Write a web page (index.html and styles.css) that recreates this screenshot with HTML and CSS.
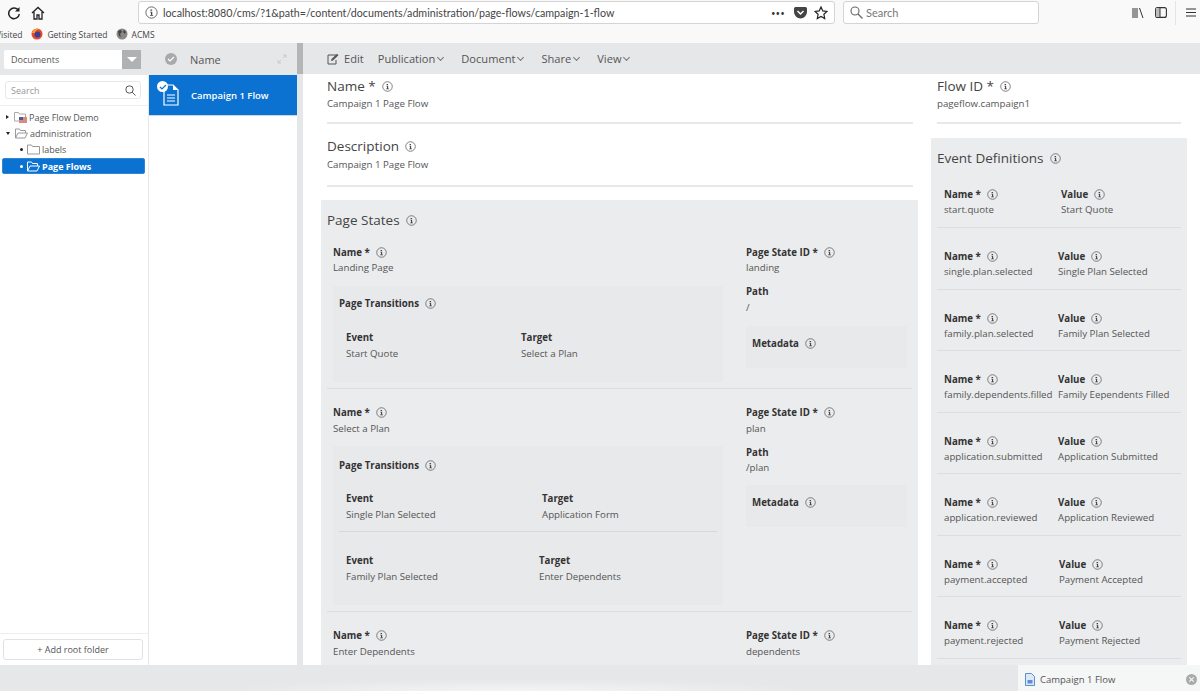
FILE: index.html
```html
<!DOCTYPE html>
<html>
<head>
<meta charset="utf-8">
<title>Campaign 1 Flow</title>
<link rel="stylesheet" href="styles.css">
</head>
<body>
<svg class="defs" width="0" height="0">
  <symbol id="info" viewBox="0 0 12 12">
    <circle cx="6" cy="6" r="5.2" fill="none" stroke="#555" stroke-width=".8"/>
    <path d="M5 3.2h1.6v1.2H5zM4.8 5.3h1.9v2.9h.8v.8H4.600v-.8h.9V6.100h-.7z" fill="#444"/>
  </symbol>
</svg>
<div class="browser">
  <div class="navrow">
    <svg class="nav-ic reload" width="14" height="14" viewBox="0 0 14 14"><path d="M11.500 4.500A5.300 5.300 0 1 0 12.300 8" fill="none" stroke="#222" stroke-width="1.500"/><path d="M12.500 1v4.500H8z" fill="#222"/></svg>
    <svg class="nav-ic home" width="14" height="14" viewBox="0 0 14 14"><path d="M1 7l6-5.500L13 7M3 6v7h3V9h2v4h3V6" fill="none" stroke="#222" stroke-width="1.300"/></svg>
    <div class="urlbar">
      <svg width="13" height="13"><use href="#info"/></svg>
      <span class="url">localhost:8080/cms/?1&amp;path=/content/documents/administration/page-flows/campaign-1-flow</span>
      <span class="dots">•••</span>
      <svg class="pocket" width="13" height="12" viewBox="0 0 13 12"><path d="M1.500 0h10A1.500 1.500 0 0 1 13 1.500V5A6.500 6.500 0 0 1 0 5V1.500A1.500 1.500 0 0 1 1.500 0z" fill="#444"/><path d="M3.500 4l3 3 3-3" fill="none" stroke="#fff" stroke-width="1.500"/></svg>
      <svg class="star" width="14" height="14" viewBox="0 0 14 14"><path d="M7 1l1.800 3.900 4.200.5-3.100 2.900.8 4.200L7 10.400l-3.700 2.100.8-4.200L1 5.400l4.200-.5z" fill="none" stroke="#222" stroke-width="1.200"/></svg>
    </div>
    <div class="searchbar">
      <svg width="13" height="13" viewBox="0 0 13 13"><circle cx="5" cy="5" r="4" fill="none" stroke="#666" stroke-width="1.100"/><path d="M8 8l4.500 4.500" stroke="#666" stroke-width="1.200"/></svg>
      <span>Search</span>
    </div>
    <svg class="tool lib" width="12" height="12" viewBox="0 0 12 12"><path d="M1 1v10M3 1v10M5 1v10M7.500 1l3.500 10" stroke="#333" stroke-width="1" fill="none"/></svg>
    <svg class="tool side" width="12" height="11" viewBox="0 0 12 11"><rect x=".6" y=".6" width="10.800" height="9.800" rx="2" fill="none" stroke="#333" stroke-width="1.100"/><path d="M1 1h4v9H1z" fill="#bbb"/><path d="M5 1v9" stroke="#333"/></svg>
    <span class="tool-sep"></span>
    <svg class="tool menu" width="10" height="9" viewBox="0 0 10 9"><path d="M0 1h10M0 4.500h10M0 8h10" stroke="#333" stroke-width="1.100"/></svg>
  </div>
  <div class="bookmarks">
    <span class="bm bm-cut">Visited</span>
    <span class="bm"><svg width="12" height="12" viewBox="0 0 12 12"><circle cx="6" cy="6" r="5.500" fill="#e5492a"/><circle cx="6.500" cy="6.500" r="3" fill="#3a3f9e"/><path d="M1 5Q3 0 8 1 4 2 4 5z" fill="#f6a623"/></svg>Getting Started</span>
    <span class="bm"><svg width="12" height="12" viewBox="0 0 12 12"><circle cx="6" cy="6" r="5.500" fill="#888"/><path d="M2 3l3-1 1 2-2 2 1 3-2-1zM8 2l2 2-1 2-2-2z" fill="#444"/></svg>ACMS</span>
  </div>
</div>

<div class="app">
  <aside class="tree-pane">
    <div class="tree-head">
      <div class="select"><span>Documents</span><b class="select-btn"><i></i></b></div>
    </div>
    <div class="tree-search">
      <div class="search-box"><span>Search</span>
        <svg width="11" height="11" viewBox="0 0 11 11"><circle cx="4.500" cy="4.500" r="3.700" fill="none" stroke="#555"/><path d="M7.200 7.200l3.300 3.300" stroke="#555"/></svg>
      </div>
    </div>
    <ul class="tree">
      <li class="lvl1"><i class="arrow right"></i>
        <svg class="folder" width="13" height="12" viewBox="0 0 13 12"><path d="M.5 10V1.500h4l1 1.500h6v7z" fill="none" stroke="#aaa"/><rect x="5" y="6" width="8" height="6" fill="#d98a85"/><rect x="5" y="6" width="4" height="3" fill="#4a5d96"/></svg>
        Page Flow Demo</li>
      <li class="lvl1"><i class="arrow down"></i>
        <svg class="folder" width="13" height="11" viewBox="0 0 13 11"><path d="M.5 10V1h4l1 1.500h5V5M.5 10L3 5h9.500L10 10z" fill="none" stroke="#999"/></svg>
        administration</li>
      <li class="lvl2"><i class="dot"></i>
        <svg class="folder" width="13" height="11" viewBox="0 0 13 11"><path d="M.5 10V1h4l1 1.500h7V10z" fill="none" stroke="#999"/></svg>
        labels</li>
      <li class="lvl2 active"><i class="dot"></i>
        <svg class="folder" width="13" height="11" viewBox="0 0 13 11"><path d="M.5 10V1h4l1 1.500h5V5M.5 10L3 5h9.500L10 10z" fill="none" stroke="#fff"/></svg>
        Page Flows</li>
    </ul>
    <div class="tree-foot"><button>+ Add root folder</button></div>
  </aside>

  <section class="list-pane">
    <div class="list-head">
      <span class="check"><svg width="8" height="8" viewBox="0 0 8 8"><path d="M1 4l2 2 4-4" fill="none" stroke="#fff" stroke-width="1.200"/></svg></span>
      <span class="list-title">Name</span>
      <svg class="expand" width="10" height="10" viewBox="0 0 10 10"><path d="M6 1h3v3M9 1L6 4M4 9H1V6M1 9l3-3" fill="none" stroke="#c8c9cb"/></svg>
    </div>
    <div class="list-item">
      <span class="doc-ic">
        <svg width="18" height="22" viewBox="0 0 18 22"><path d="M3 1h9l5 5v15H3z" fill="none" stroke="#fff" stroke-width="1.200"/><path d="M12 1v5h5" fill="#fff"/><path d="M6 11h8M6 14h8M6 17h8" stroke="#fff" stroke-width="1.200"/></svg>
        <span class="doc-check"><svg width="8" height="8" viewBox="0 0 8 8"><path d="M1 4l2 2 4-4" fill="none" stroke="#0b72d2" stroke-width="1.200"/></svg></span>
      </span>
      <span>Campaign 1 Flow</span>
    </div>
  </section>

  <div class="splitter"></div>

  <main class="editor">
    <nav class="toolbar">
      <span class="tb-item tb-edit"><svg width="13" height="12" viewBox="0 0 13 12"><path d="M9 2H1v9h8V7" fill="none" stroke="#555"/><path d="M4 8l.5-2L10 .8l1.500 1.500L6 7.500z" fill="#555"/></svg>Edit</span>
      <span class="tb-item">Publication<i class="chev"></i></span>
      <span class="tb-item">Document<i class="chev"></i></span>
      <span class="tb-item">Share<i class="chev"></i></span>
      <span class="tb-item">View<i class="chev"></i></span>
    </nav>
    <div class="form">
      <div class="col-left">
        <div class="big-field first">
          <h2>Name * <svg class="i"><use href="#info"/></svg></h2>
          <p>Campaign 1 Page Flow</p>
        </div>
        <div class="big-field second">
          <h2>Description <svg class="i"><use href="#info"/></svg></h2>
          <p>Campaign 1 Page Flow</p>
        </div>
        <section class="panel states">
          <h2>Page States <svg class="i"><use href="#info"/></svg></h2>

          <div class="state s1">
            <div class="state-main">
              <div class="fld"><h4>Name * <svg class="i"><use href="#info"/></svg></h4><p>Landing Page</p></div>
              <div class="transitions">
                <h4>Page Transitions <svg class="i"><use href="#info"/></svg></h4>
                <div class="trans t1"><div><h5>Event</h5><p>Start Quote</p></div><div><h5>Target</h5><p>Select a Plan</p></div></div>
              </div>
            </div>
            <div class="state-side">
              <div class="fld"><h4>Page State ID * <svg class="i"><use href="#info"/></svg></h4><p>landing</p></div>
              <div class="fld path"><h4>Path</h4><p>/</p></div>
              <div class="meta"><h4>Metadata <svg class="i"><use href="#info"/></svg></h4></div>
            </div>
          </div>

          <div class="state s2">
            <div class="state-main">
              <div class="fld"><h4>Name * <svg class="i"><use href="#info"/></svg></h4><p>Select a Plan</p></div>
              <div class="transitions">
                <h4>Page Transitions <svg class="i"><use href="#info"/></svg></h4>
                <div class="trans t2 ruled"><div><h5>Event</h5><p>Single Plan Selected</p></div><div><h5>Target</h5><p>Application Form</p></div></div>
                <div class="trans t3"><div><h5>Event</h5><p>Family Plan Selected</p></div><div><h5>Target</h5><p>Enter Dependents</p></div></div>
              </div>
            </div>
            <div class="state-side">
              <div class="fld"><h4>Page State ID * <svg class="i"><use href="#info"/></svg></h4><p>plan</p></div>
              <div class="fld path"><h4>Path</h4><p>/plan</p></div>
              <div class="meta"><h4>Metadata <svg class="i"><use href="#info"/></svg></h4></div>
            </div>
          </div>

          <div class="state s3">
            <div class="state-main">
              <div class="fld"><h4>Name * <svg class="i"><use href="#info"/></svg></h4><p>Enter Dependents</p></div>
            </div>
            <div class="state-side">
              <div class="fld"><h4>Page State ID * <svg class="i"><use href="#info"/></svg></h4><p>dependents</p></div>
            </div>
          </div>
        </section>
      </div>

      <div class="col-right">
        <div class="big-field first flow-id">
          <h2>Flow ID * <svg class="i"><use href="#info"/></svg></h2>
          <p>pageflow.campaign1</p>
        </div>
        <section class="panel events">
          <h2>Event Definitions <svg class="i"><use href="#info"/></svg></h2>
          <div class="ev"><div class="ev-name"><h4>Name * <svg class="i"><use href="#info"/></svg></h4><p>start.quote</p></div><div class="ev-val far"><h4>Value <svg class="i"><use href="#info"/></svg></h4><p>Start Quote</p></div></div>
          <div class="ev"><div class="ev-name"><h4>Name * <svg class="i"><use href="#info"/></svg></h4><p>single.plan.selected</p></div><div class="ev-val"><h4>Value <svg class="i"><use href="#info"/></svg></h4><p>Single Plan Selected</p></div></div>
          <div class="ev"><div class="ev-name"><h4>Name * <svg class="i"><use href="#info"/></svg></h4><p>family.plan.selected</p></div><div class="ev-val"><h4>Value <svg class="i"><use href="#info"/></svg></h4><p>Family Plan Selected</p></div></div>
          <div class="ev"><div class="ev-name"><h4>Name * <svg class="i"><use href="#info"/></svg></h4><p>family.dependents.filled</p></div><div class="ev-val"><h4>Value <svg class="i"><use href="#info"/></svg></h4><p>Family Eependents Filled</p></div></div>
          <div class="ev"><div class="ev-name"><h4>Name * <svg class="i"><use href="#info"/></svg></h4><p>application.submitted</p></div><div class="ev-val"><h4>Value <svg class="i"><use href="#info"/></svg></h4><p>Application Submitted</p></div></div>
          <div class="ev"><div class="ev-name"><h4>Name * <svg class="i"><use href="#info"/></svg></h4><p>application.reviewed</p></div><div class="ev-val"><h4>Value <svg class="i"><use href="#info"/></svg></h4><p>Application Reviewed</p></div></div>
          <div class="ev"><div class="ev-name"><h4>Name * <svg class="i"><use href="#info"/></svg></h4><p>payment.accepted</p></div><div class="ev-val mid"><h4>Value <svg class="i"><use href="#info"/></svg></h4><p>Payment Accepted</p></div></div>
          <div class="ev"><div class="ev-name"><h4>Name * <svg class="i"><use href="#info"/></svg></h4><p>payment.rejected</p></div><div class="ev-val mid"><h4>Value <svg class="i"><use href="#info"/></svg></h4><p>Payment Rejected</p></div></div>
        </section>
      </div>
    </div>
  </main>
</div>

<footer class="tabs">
  <div class="tab">
    <svg width="10" height="13" viewBox="0 0 10 13"><path d="M.5.500h6l3 3v9H.5z" fill="#dce8f7" stroke="#5d8fd0"/><path d="M2.500 7h5v3.500h-5z" fill="#5d8fd0"/></svg>
    <span class="tab-title">Campaign 1 Flow</span>
    <svg class="tab-close" width="11" height="11" viewBox="0 0 11 11"><circle cx="5.500" cy="5.500" r="5.500" fill="#a9aaac"/><path d="M3.300 3.300l4.400 4.400M7.700 3.300L3.300 7.700" stroke="#f5f6f6" stroke-width="1.200"/></svg>
  </div>
</footer>
</body>
</html>
```

FILE: styles.css
```css
* { box-sizing: border-box; }
html, body { margin: 0; height: 100%; overflow: hidden; }
body {
    width: 1200px;
    height: 691px;
    font-family: "Open Sans", sans-serif;
    font-size: 10px;
    color: #444;
    background: #fff;
    display: flex;
    flex-direction: column;
}
.defs { position: absolute; }
h2, h4, h5, p, ul { margin: 0; padding: 0; }

/* browser chrome */
.browser { height: 43px; flex: none; background: #f9f9fa; overflow: hidden; }
.navrow { height: 25px; display: flex; align-items: center; }
.nav-ic.reload { margin-left: 7px; }
.nav-ic.home { margin-left: 10px; }
.urlbar {
    margin-left: 93px;
    width: 697px;
    height: 23px;
    background: #fff;
    border: 1px solid #d4d4d5;
    border-radius: 3px;
    display: flex;
    align-items: center;
    padding: 0 6px 0 6px;
    font-family: "Lato", sans-serif;
}
.url { margin-left: 5px; font-size: 10.700px; color: #444; flex: 1; white-space: nowrap; }
.dots { font-size: 7px; color: #333; letter-spacing: .5px; }
.pocket { margin-left: 9px; }
.star { margin-left: 7px; }
.searchbar {
    margin-left: 8px;
    width: 196px;
    height: 23px;
    background: #fff;
    border: 1px solid #d4d4d5;
    border-radius: 3px;
    display: flex;
    align-items: center;
    gap: 3px;
    padding-left: 6px;
    font-family: "Lato", sans-serif;
    font-size: 11px;
    color: #777;
}
.tool.lib { margin-left: 93px; }
.tool.side { margin-left: 11px; }
.tool-sep { width: 1px; height: 24px; background: #e4e4e4; margin-left: 8px; }
.tool.menu { margin-left: 10px; }
.bookmarks { height: 18px; display: flex; align-items: center; font-size: 8.500px; color: #444; margin-left: -4px; }
.bm { display: flex; align-items: center; gap: 4px; margin-right: 8px; }
.bm-cut { margin-right: 9px; }

/* app */
.app { flex: 1; min-height: 0; display: flex; overflow: hidden; }

.tree-pane {
    width: 149px;
    flex: none;
    border-right: 1px solid #e8e8ea;
    display: flex;
    flex-direction: column;
}
.tree-head { height: 32px; background: #e6e7e9; padding: 7px 7px 0 4px; }
.select { height: 19px; background: #fff; display: flex; border-radius: 2px; font-size: 9px; line-height: 19px; color: #555; padding-left: 7px; }
.select span { flex: 1; }
.select-btn { width: 19px; background: #b0b1b3; display: flex; align-items: center; justify-content: center; }
.select-btn i { border: 5px solid transparent; border-top-color: #fff; border-bottom: 0; }
.tree-search { height: 31px; padding: 6px 7px 0 5px; border-bottom: 1px solid #eeeeef; }
.search-box {
    height: 18px;
    border: 1px solid #e8e8ea;
    border-radius: 3px;
    display: flex;
    align-items: center;
    justify-content: space-between;
    padding: 0 4px 0 5px;
    font-size: 9px;
    color: #999;
}
.tree { list-style: none; flex: 1; padding: 3px 3px 0 2px; font-size: 9px; color: #555; }
.tree li { height: 16.300px; display: flex; align-items: center; white-space: nowrap; }
.tree .lvl1 { padding-left: 4px; }
.tree .lvl2 { padding-left: 18px; }
.tree .folder { margin: 0 2px 0 4px; flex: none; }
.tree .lvl1 .folder { margin-left: 5px; }
.tree .active { background: #0b72d2; color: #fff; font-weight: 700; border-radius: 2px; border: 1px solid #2f86d8; padding-left: 17px; }
.arrow { width: 0; height: 0; border: 2.500px solid transparent; }
.arrow.right { border-left: 3.500px solid #222; border-right: 0; }
.arrow.down { border-top: 3.500px solid #222; border-bottom: 0; }
.dot { width: 3px; height: 3px; border-radius: 50%; background: #222; }
.active .dot { background: #fff; }
.tree-foot { height: 32px; border-top: 1px solid #eeeeef; padding: 5px 5px 0 3px; }
.tree-foot button {
    width: 100%;
    height: 21px;
    background: #fff;
    border: 1px solid #e2e2e4;
    border-radius: 3px;
    font: 9px "Open Sans", sans-serif;
    color: #555;
}

.list-pane { width: 148px; flex: none; }
.list-head { height: 32px; background: #e6e7e9; display: flex; align-items: center; position: relative; }
.check { width: 12px; height: 12px; border-radius: 50%; background: #a8a9ab; margin-left: 16px; display: flex; align-items: center; justify-content: center; }
.list-title { margin-left: 13px; font-size: 11px; color: #555; }
.expand { position: absolute; right: 10px; top: 11px; }
.list-item {
    height: 41px;
    background: #0b72d2;
    color: #fff;
    font-size: 9.500px;
    font-weight: 600;
    display: flex;
    align-items: center;
    border-bottom: 1px solid #c8d6ea;
}
.doc-ic { position: relative; width: 18px; height: 22px; margin-left: 12px; margin-right: 12px; }
.doc-ic > svg { display: block; }
.doc-check { position: absolute; left: -4px; top: -3px; width: 11px; height: 11px; border-radius: 50%; background: #fff; display: flex; align-items: center; justify-content: center; }

.splitter { width: 6px; flex: none; background: #e6e7e9; position: relative; }
.splitter::before { content: ""; display: block; height: 31px; background: #b4b5b7; }

.editor { flex: 1; min-width: 0; display: flex; flex-direction: column; }
.toolbar {
    height: 31px;
    flex: none;
    background: #e6e7e9;
    display: flex;
    align-items: center;
    padding-left: 24px;
    font-size: 11.100px;
    color: #555;
    gap: 17px;
}
.tb-item { display: flex; align-items: center; }
.tb-edit { margin-right: -3px; }
.tb-edit svg { margin-right: 4px; }
.chev { width: 5px; height: 5px; border-right: 1px solid #777; border-bottom: 1px solid #777; transform: rotate(45deg); margin: -3px 1px 0 3px; }

.form { flex: 1; min-height: 0; display: flex; overflow: hidden; }
.col-left { width: 628px; flex: none; padding: 0 9px 0 18px; }
.col-right { width: 269px; flex: none; padding-left: 6px; }

.big-field h2, .panel > h2 { font-size: 13.500px; font-weight: 400; color: #444; line-height: 18px; display: flex; align-items: center; gap: 6px; white-space: nowrap; }
.big-field p { font-size: 9.700px; line-height: 13px; margin-top: 2px; color: #555; }
.big-field { margin: 0 9px 0 6px; border-bottom: 2px solid #e8e8ea; }
.big-field.first { height: 50px; padding-top: 3px; }
.big-field.second { height: 63px; padding-top: 13px; }
.big-field.second p { margin-top: 3px; }
.col-right .flow-id { width: 244px; margin: 0; }
svg.i { width: 11px; height: 11px; flex: none; }

.panel { background: #ebecee; }
.states { margin-top: 13px; width: 597px; padding: 11px 6px 0 6px; height: 480px; }
.state { display: flex; border-bottom: 1px solid #dcdde0; }
.state-main { flex: 0 0 406px; padding-left: 6px; }
.state-side { flex: 1; padding-left: 13px; }
.s1 { height: 160px; padding-top: 17px; }
.s2 { height: 223px; padding-top: 17px; }
.s3 { border-bottom: 0; padding-top: 17px; }

h4, h5 { font-size: 9.700px; font-weight: 700; color: #333; line-height: 13px; display: flex; align-items: center; gap: 6px; white-space: nowrap; }
.fld p, .trans p, .ev p { font-size: 9.700px; line-height: 13px; color: #555; margin-top: 2.500px; white-space: nowrap; }
.s1 .fld p { margin-top: 2px; }
.s1 .path p, .t2 p, .t3 p { margin-top: 3px; }
.path { margin-top: 11px; }
.transitions { background: #e8e9eb; margin-top: 12px; padding: 11px 6px 0; height: 96px; width: 390px; }
.s2 .transitions { height: 159px; margin-top: 11px; padding-top: 13px; }
.trans { display: flex; padding: 0 0 0 7px; }
.t1 { margin-top: 21px; }
.t1 > div:first-child { width: 175px; }
.t2 { margin-top: 20px; height: 40px; border-bottom: 1px solid #d8d9dc; }
.t2 > div:first-child { width: 196px; }
.t3 { margin-top: 22px; }
.t3 > div:first-child { width: 193px; }
.meta { background: #e8e9eb; margin-top: 12px; width: 161px; height: 42px; padding: 11px 6px 0; }
.s2 .meta { margin-top: 11px; }

.events { margin-top: 14px; margin-left: -6px; width: 256px; height: 530px; padding: 11px 6px 0; }
.events > h2 { margin-bottom: 20px; }
.ev { display: flex; height: 61.500px; padding: 22px 0 0 7px; border-bottom: 1px solid #dcdde0; }
.ev:first-of-type { padding-top: 1px; height: 41px; }
.ev p { margin-top: 2px; }
.ev-name { width: 114px; flex: none; }
.ev-val.far { margin-left: 3px; }
.ev-val.mid { margin-left: 1px; }

/* bottom tab strip */
.tabs {
    height: 26px;
    flex: none;
    display: flex;
    justify-content: flex-end;
    background: radial-gradient(ellipse 300px 12px at 520px 100%, #f4f4f5, transparent), #e6e7e9;
}
.tab {
    width: 182px;
    background: #f5f6f6;
    display: flex;
    align-items: center;
    padding: 2px 3px 0 7px;
    font-size: 9.500px;
    color: #555;
}
.tab-title { margin-left: 5px; flex: 1; }
```
